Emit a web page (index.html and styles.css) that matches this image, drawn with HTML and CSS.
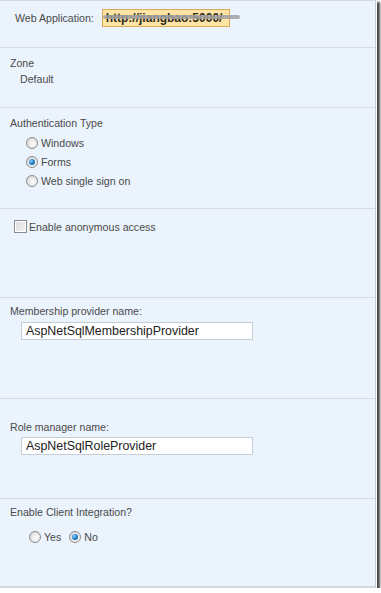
FILE: index.html
```html
<!DOCTYPE html>
<html lang="en">
  <head>
    <meta charset="UTF-8" />
    <title>Authentication Providers</title>
    <link rel="stylesheet" href="styles.css">
  </head>

  <body>
    <div class="panel">
      <div class="section s-webapp">
        <span class="label">Web Application:</span>
        <span class="url-box">
          <span class="url-text">http://jiangbao:5000/</span>
          <span class="url-scribble"></span>
        </span>
      </div>

      <div class="section s-zone">
        <div class="label">Zone</div>
        <div class="value">Default</div>
      </div>

      <div class="section s-auth">
        <div class="label">Authentication Type</div>
        <div class="options">
          <label class="option"><input type="radio" name="auth" /> Windows</label>
          <label class="option"><input type="radio" name="auth" checked /> Forms</label>
          <label class="option"><input type="radio" name="auth" /> Web single sign on</label>
        </div>
      </div>

      <div class="section s-anon">
        <label class="option"><input type="checkbox" /> Enable anonymous access</label>
      </div>

      <div class="section s-member">
        <div class="label">Membership provider name:</div>
        <input class="text-input" type="text" value="AspNetSqlMembershipProvider" />
      </div>

      <div class="section s-role">
        <div class="label">Role manager name:</div>
        <input class="text-input" type="text" value="AspNetSqlRoleProvider" />
      </div>

      <div class="section s-client">
        <div class="label">Enable Client Integration?</div>
        <div class="inline-options">
          <label class="option"><input type="radio" name="client" /> Yes</label>
          <label class="option"><input type="radio" name="client" checked /> No</label>
        </div>
      </div>
    </div>
  </body>
</html>
```

FILE: styles.css
```css
* {
  box-sizing: border-box;
  margin: 0;
  padding: 0;
}

body {
  font-family: 'Liberation Sans', Arial, sans-serif;
  font-size: 10.6px;
  color: #4a4a4a;
  background: #fff;
}

.panel {
  width: 376px;
  height: 588px;
  background: #ebf3fd;
  border-top: 1px solid #d4d8dc;
  border-right: 1px solid #c8ccd0;
  border-bottom: 2px solid #d4d8dc;
  box-shadow: 1px 1px 0 0 #fff, 3px 3px 2px 1px #4a4a4a;
}

.section {
  border-bottom: 1px solid #d6dbe1;
  padding-left: 10px;
}

.label {
  line-height: 14px;
}

/* web application row */
.s-webapp {
  height: 47px;
  display: flex;
  align-items: flex-start;
  padding: 8px 0 0 15px;
}

.s-webapp .label {
  line-height: 18px;
  margin-right: 8px;
}

.url-box {
  position: relative;
  width: 128px;
  height: 18px;
  background: #ffe4a3;
  border: 1px solid #d9a95c;
}

.url-text {
  display: block;
  padding-left: 3px;
  font-weight: bold;
  font-size: 12px;
  line-height: 16px;
  color: #2e2a20;
  white-space: nowrap;
  overflow: hidden;
}

.url-scribble {
  position: absolute;
  left: 0;
  top: 5px;
  width: 137px;
  height: 4px;
  background: rgba(160, 160, 160, 0.85);
  border-radius: 2px;
}

/* zone */
.s-zone {
  height: 60px;
  padding-top: 8px;
}

.s-zone .value {
  margin: 2px 0 0 10px;
  line-height: 14px;
}

/* authentication */
.s-auth {
  height: 101px;
  padding-top: 8px;
}

.options {
  margin: 3px 0 0 16px;
}

.option {
  display: flex;
  align-items: center;
  height: 19px;
  gap: 3px;
}

input[type="radio"] {
  appearance: none;
  width: 12px;
  height: 12px;
  border-radius: 50%;
  border: 1px solid #8d8d8d;
  background: radial-gradient(circle at 60% 60%, #fdfdfd 0, #e6e6e6 55%, #c4c4c4 100%);
  position: relative;
  flex: none;
}

input[type="radio"]:checked::after {
  content: '';
  position: absolute;
  left: 2px;
  top: 2px;
  width: 6px;
  height: 6px;
  border-radius: 50%;
  background: radial-gradient(circle at 35% 35%, #7fd0ff 0, #1c78c4 55%, #0b4a86 100%);
}

input[type="checkbox"] {
  appearance: none;
  width: 13px;
  height: 13px;
  border: 1px solid #8a8a8a;
  background: linear-gradient(135deg, #d9d9d9, #f6f6f6);
  box-shadow: inset 0 0 0 1px #fff;
  flex: none;
}

/* anonymous */
.s-anon {
  height: 89px;
  padding: 8px 0 0 14px;
}

.s-anon .option {
  gap: 2px;
}

/* provider names */
.s-member {
  height: 101px;
  padding-top: 6px;
}

.s-role {
  height: 100px;
  padding-top: 21px;
}

.s-role .text-input {
  margin-top: 3px;
}

.text-input {
  display: block;
  margin: 4px 0 0 11px;
  width: 232px;
  height: 18px;
  border: 1px solid #c5cdd6;
  background: #fff;
  font-family: 'Liberation Sans', Arial, sans-serif;
  font-size: 12.4px;
  color: #222;
  padding: 0 4px;
  outline: none;
}

/* client integration */
.s-client {
  border-bottom: none;
  padding-top: 6px;
}

.inline-options {
  display: flex;
  gap: 8px;
  margin: 8px 0 0 19px;
}
```
